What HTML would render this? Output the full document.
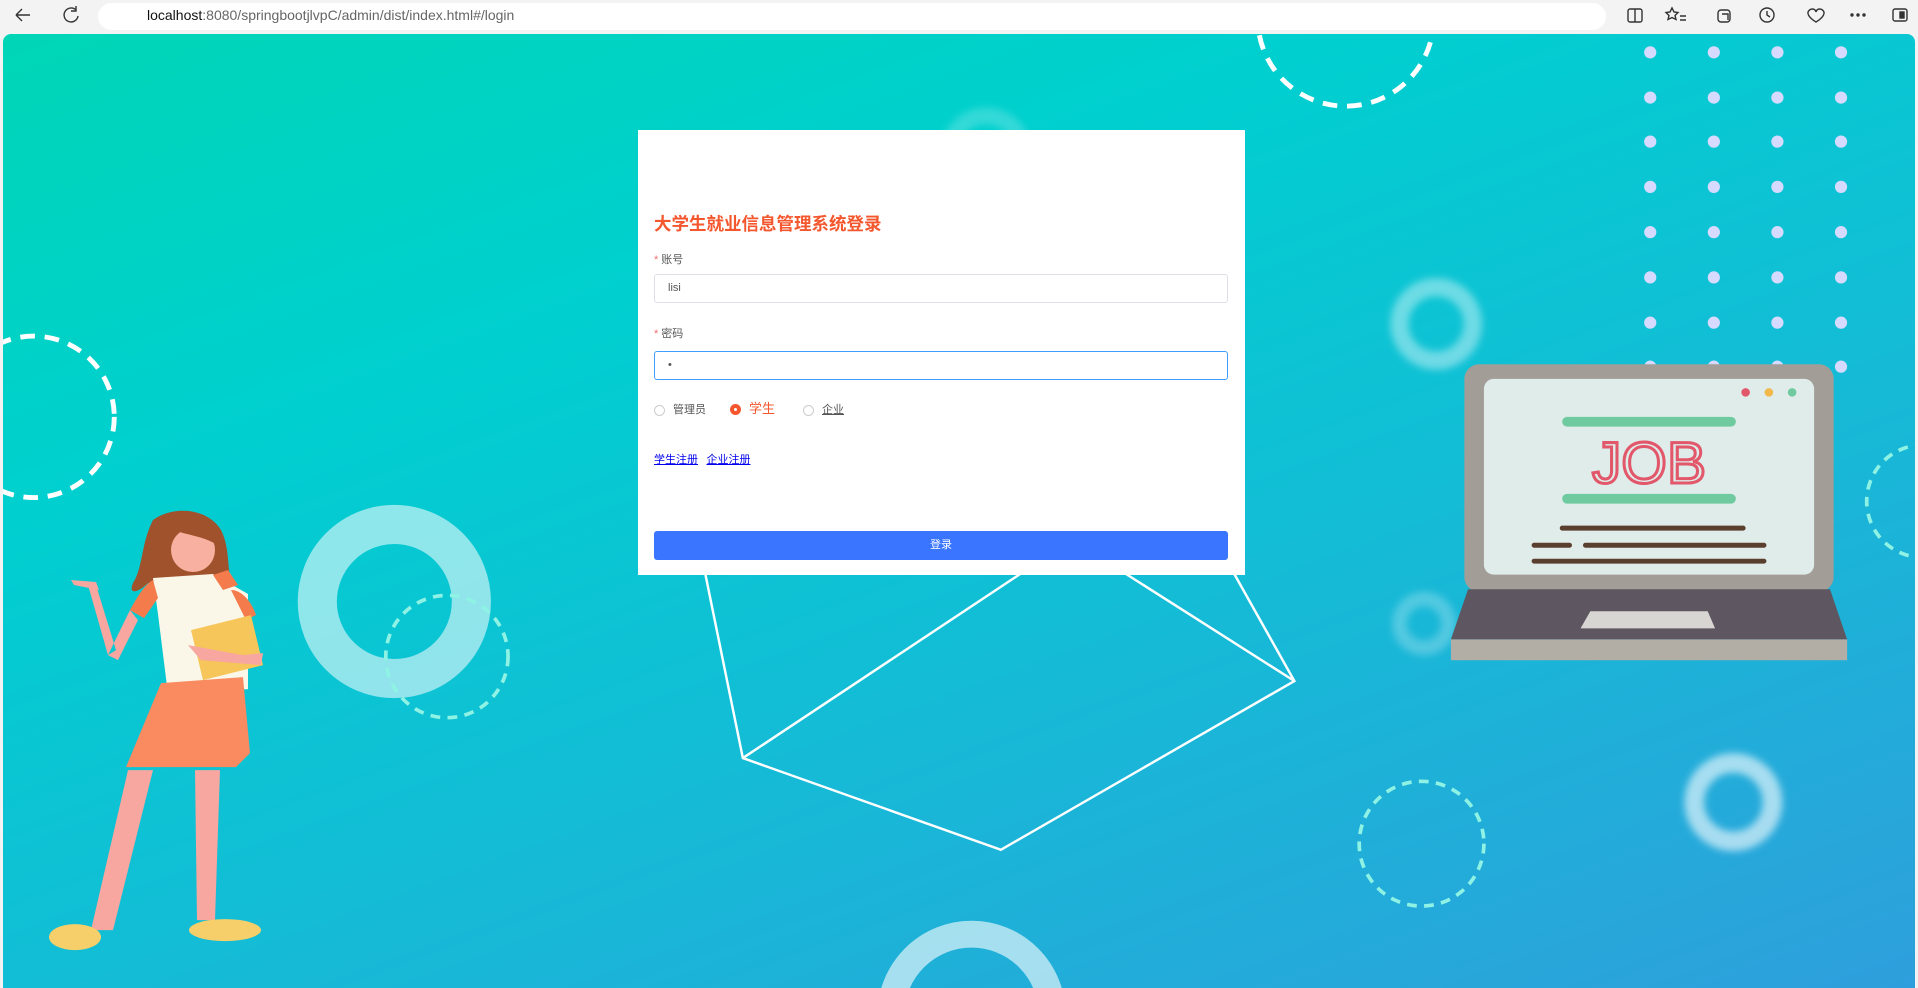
<!DOCTYPE html>
<html><head><meta charset="utf-8"><style>
*{margin:0;padding:0;box-sizing:border-box}
html,body{overflow:hidden}
body{width:1918px;height:988px;overflow:hidden;background:#f3f3f3;font-family:"Liberation Sans","Noto Sans CJK SC",sans-serif;position:relative}
.bar{position:absolute;left:0;top:0;width:1918px;height:34px;background:#f3f3f3}
.addr{position:absolute;left:98px;top:3px;width:1508px;height:27px;background:#fff;border-radius:14px}
.url{position:absolute;left:147px;top:7px;font-size:14px;color:#666;white-space:nowrap}
.url b{font-weight:normal;color:#111}
.main{position:absolute;left:3px;top:34px;width:1912px;height:954px;border-radius:8px 8px 0 0;overflow:hidden;background:linear-gradient(160deg,#00d6b6 0%,#00cfd0 30%,#14bcd6 60%,#2e9fdc 100%)}
.card{position:absolute;left:635px;top:96px;width:607px;height:445px;background:#fff}
.title{position:absolute;left:16px;top:83px;font-size:17.5px;line-height:22px;font-weight:bold;color:#f4572e}
.lab{position:absolute;left:16px;font-size:11px;line-height:14px;color:#555}
.lab i{color:#f56c6c;font-style:normal;margin-right:3px}
.inp{position:absolute;left:16px;width:574px;height:29px;border:1px solid #dcdfe6;border-radius:3px;font-size:11px;line-height:27px;color:#555;padding:0 13px}
.rad{position:absolute;font-size:11px;line-height:14px;color:#555;display:flex;align-items:center}
.rad span.c{width:11px;height:11px;border:1px solid #ccc;border-radius:50%;display:inline-block;margin-right:8px}
.links{position:absolute;left:16px}
.links a{font-size:11px;color:#00e;text-decoration:underline;margin-right:4px}
.btn{position:absolute;left:16px;width:574px;height:29px;background:#3a75ff;border-radius:3px;color:#fff;font-size:11px;text-align:center;line-height:29px}
</style></head><body>
<div class="bar">
<svg width="1918" height="34" style="position:absolute;left:0;top:0" fill="none" stroke="#333" stroke-width="1.4">
<path d="M16 15h14M16 15l6-6M16 15l6 6"/>
<path d="M76 10a7 7 0 1 0 2 6M76 6v5h-5"/>
<circle cx="123" cy="16" r="7"/><path d="M123 13v1M123 15v5"/>
<path d="M1453 20l6-6 3 3M1453 20h3"/>
<circle cx="1496" cy="15" r="6"/><path d="M1500 19l4 4M1493 15h6"/>
<text x="1530" y="21" font-size="13" fill="#333" stroke="none" font-family="Liberation Sans">A</text>
<path d="M1580 8l2.5 5 5.5.8-4 4 1 5.5-5-2.6-5 2.6 1-5.5-4-4 5.5-.8z"/>
<rect x="1628" y="9" width="14" height="13" rx="2"/><path d="M1635 9v13"/>
<path d="M1672 8l2 4 4 .5-3 3 1 4-4-2-4 2 1-4-3-3 4-.5zM1680 16h6M1680 20h6"/>
<rect x="1718" y="10" width="12" height="12" rx="3"/><path d="M1722 14h6v6"/>
<circle cx="1767" cy="15" r="7"/><path d="M1767 11v4l3 2"/>
<path d="M1808 12c2-4 7-4 8 0 1-4 6-4 8 0 1 5-8 10-8 10s-9-5-8-10z"/>
<circle cx="1852" cy="15" r="1" fill="#333"/><circle cx="1858" cy="15" r="1" fill="#333"/><circle cx="1864" cy="15" r="1" fill="#333"/>
<rect x="1893" y="9" width="14" height="12" rx="2"/><rect x="1900" y="12" width="4" height="6" fill="#333"/>
</svg>
<div class="addr"></div>
<div class="url"><b>localhost</b>:8080/springbootjlvpC/admin/dist/index.html#/login</div>
</div>
<div class="main">
<svg width="1912" height="954" viewBox="2 28 1563.5 780" preserveAspectRatio="none" style="position:absolute;left:0;top:0" fill="none">
<defs><filter id="bl"><feGaussianBlur stdDeviation="3"/></filter></defs>
<circle cx="1100" cy="15" r="72" stroke="#fff" stroke-width="4" stroke-dasharray="12 8"/>
<circle cx="27" cy="341" r="66" stroke="#fff" stroke-width="4" stroke-dasharray="12 8"/>
<circle cx="322" cy="492" r="63" stroke="#fff" stroke-opacity=".55" stroke-width="32"/>
<circle cx="365" cy="537" r="50" stroke="#8ef2e4" stroke-width="3" stroke-dasharray="8 6"/>
<circle cx="1162" cy="690" r="51" stroke="#8ef2e4" stroke-width="3" stroke-dasharray="8 6"/>
<circle cx="1572" cy="410" r="46" stroke="#8ef2e4" stroke-width="3" stroke-dasharray="8 6"/>
<g filter="url(#bl)">
<circle cx="1174" cy="265" r="30" stroke="#fff" stroke-opacity=".4" stroke-width="15"/>
<circle cx="1164" cy="510" r="20" stroke="#fff" stroke-opacity=".25" stroke-width="12"/>
<circle cx="1417" cy="656" r="32" stroke="#fff" stroke-opacity=".6" stroke-width="16"/>
<circle cx="806" cy="125" r="30" stroke="#fff" stroke-opacity=".2" stroke-width="14"/>
</g>
<circle cx="794" cy="830" r="66" stroke="#fff" stroke-opacity=".6" stroke-width="22"/>
<g fill="#d6daff">
<g id="r"><circle cx="1349" cy="43" r="5"/><circle cx="1401" cy="43" r="5"/><circle cx="1453" cy="43" r="5"/><circle cx="1505" cy="43" r="5"/></g>
<use href="#r" y="37"/><use href="#r" y="73"/><use href="#r" y="110"/><use href="#r" y="147"/><use href="#r" y="184"/><use href="#r" y="221"/><use href="#r" y="257"/>
</g>
<path d="M576 468L607 620L818 695L1058 557L1008 468M607 620L836 468M918 468L1058 557" stroke="#fff" stroke-width="2"/>
<rect x="1197" y="298" width="302" height="186" rx="12" fill="#a29d97"/>
<rect x="1213" y="310" width="270" height="160" rx="8" fill="#dfecea"/>
<circle cx="1427" cy="321" r="3.5" fill="#e2576a"/><circle cx="1446" cy="321" r="3.5" fill="#f2b94a"/><circle cx="1465" cy="321" r="3.5" fill="#6fcaa0"/>
<rect x="1277" y="341" width="142" height="8" rx="4" fill="#6fcaa0"/>
<rect x="1277" y="404" width="142" height="8" rx="4" fill="#6fcaa0"/>
<text x="1348" y="395" text-anchor="middle" font-family="Liberation Sans" font-size="48" fill="none" stroke="#e2576a" stroke-width="2.5">JOB</text>
<path d="M1277 432h148M1254 446h29M1296 446h146M1254 459h188" stroke="#5a3e2e" stroke-width="4" stroke-linecap="round"/>
<path d="M1200 482H1496L1510 523H1186Z" fill="#5e5660"/>
<rect x="1186" y="523" width="324" height="17" fill="#b2ada5"/>
<path d="M1300 500H1396L1402 514H1292Z" fill="#d8d6d2"/>
<g transform="translate(2 28) scale(0.8177) translate(0 -34)">
<path d="M150 520c20-15 55-12 68 10 10 20 5 40 12 58-25 10-60 8-85-5-10 10-20 12-15 0 10-15 8-40 20-63z" fill="#a0522d"/>
<circle cx="190" cy="550" r="22" fill="#f8b0a0"/>
<path d="M166 528c10-8 40-10 50 5l-5 10c-15-8-30-8-45-15z" fill="#a0522d"/>
<path d="M150 578l60-4 35 20 0 95-80 5-10-80z" fill="#fbf7e8"/>
<path d="M150 580c-10 5-20 25-23 30l14 8 14-20zM210 575l10 15 15-5-10-15zM228 590c10 0 20 10 25 25l-10 5z" fill="#f47c4c"/>
<path d="M127 610l-22 45 10 5 20-40zM105 655l-20-70 8 0 20 65z" fill="#f7a6a0"/>
<path d="M68 580l25 2 3 8-25-5z" fill="#f7a6a0"/>
<path d="M188 630l60-15 12 50-60 15z" fill="#f7c65a"/>
<path d="M185 645l55 10 20-2-2 12-60-5z" fill="#f7a6a0"/>
<path d="M158 683l82-6 7 76-14 14-110 0z" fill="#fa8a60"/>
<path d="M125 770l25 0-40 160-22 0z" fill="#f7a6a0"/>
<path d="M192 770l25 0-5 150-18 0z" fill="#f7a6a0"/>
<ellipse cx="72" cy="937" rx="26" ry="13" fill="#f7cf6a"/>
<ellipse cx="222" cy="930" rx="36" ry="11" fill="#f7cf6a"/>
</g>
</svg>
<div class="card">
<div class="title">大学生就业信息管理系统登录</div>
<div class="lab" style="top:123px"><i>*</i>账号</div>
<div class="inp" style="top:144px">lisi</div>
<div class="lab" style="top:197px"><i>*</i>密码</div>
<div class="inp" style="top:221px;border-color:#409eff">•</div>
<div class="rad" style="left:16px;top:273px"><span class="c"></span>管理员</div>
<div class="rad" style="left:92px;top:272px;color:#f4572e;font-size:13px"><span class="c" style="border:4px solid #f4572e;background:#fff"></span>学生</div>
<div class="rad" style="left:165px;top:273px"><span class="c"></span><u>企业</u></div>
<div class="links" style="top:320px"><a>学生注册</a> <a>企业注册</a></div>
<div class="btn" style="top:401px">登录</div>
</div>
</div>
</body></html>
